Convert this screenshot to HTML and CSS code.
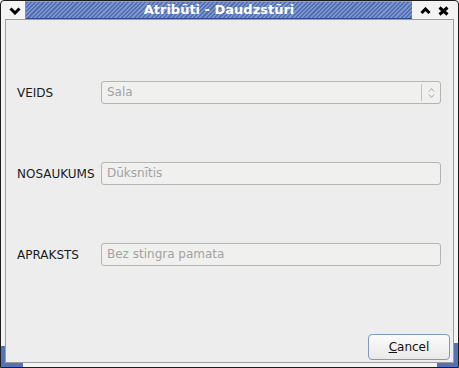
FILE: index.html
```html
<!DOCTYPE html>
<html lang="lv">
<head>
  <meta charset="UTF-8" />
  <title>Atribūti - Daudzstūri</title>
  <link rel="stylesheet" href="styles.css">
</head>
<body>
  <div class="window">
    <div class="titlebar">
      <div class="tb-menu">
        <svg width="12" height="8" viewBox="0 0 12 8"><path d="M1.5 1.5l4.5 4.5 4.5-4.5" fill="none" stroke="#000" stroke-width="3"/></svg>
      </div>
      <div class="tb-title">Atribūti - Daudzstūri</div>
      <div class="tb-btns">
        <span class="tb-btn">
          <svg width="11" height="7" viewBox="0 0 11 7"><path d="M1.5 6l4-4 4 4" fill="none" stroke="#000" stroke-width="3"/></svg>
        </span>
        <span class="tb-btn">
          <svg width="11" height="10" viewBox="0 0 11 10"><path d="M1.5 1.5l8 7M9.5 1.5l-8 7" fill="none" stroke="#000" stroke-width="3"/></svg>
        </span>
      </div>
    </div>

    <div class="client">
      <div class="form">
        <label class="label">VEIDS</label>
        <div class="field combo">
          <span class="combo-text">Sala</span>
          <span class="combo-arrow">
            <svg width="7" height="12" viewBox="0 0 7 12"><path d="M1 4.5l2.5-3 2.5 3M1 7.5l2.5 3 2.5-3" fill="none" stroke="#a8a8a8" stroke-width="1"/></svg>
          </span>
        </div>

        <label class="label">NOSAUKUMS</label>
        <div class="field">Dūksnītis</div>

        <label class="label">APRAKSTS</label>
        <div class="field">Bez stingra pamata</div>
      </div>

      <div class="footer">
        <button class="btn"><u>C</u>ancel</button>
      </div>
    </div>

    <span class="grip grip-left"></span>
    <span class="grip grip-right"></span>
  </div>
</body>
</html>
```

FILE: styles.css
```css
body {
  margin: 0;
  background: #fff;
  font-family: "DejaVu Sans", sans-serif;
  font-size: 12px;
  color: #1b1b1b;
}
.window {
  position: relative;
  box-sizing: border-box;
  width: 459px;
  height: 368px;
  border: 1px solid #1c1c1c;
  border-radius: 4px 4px 0 0;
  background: #f3f3f3;
  display: flex;
  flex-direction: column;
}
.titlebar {
  height: 18px;
  display: flex;
}
.tb-menu {
  box-sizing: border-box;
  width: 25px;
  padding: 2px 0 0 4px;
  border-right: 1px solid #8e8e8e;
  display: flex;
  align-items: center;
  justify-content: center;
}
.tb-title {
  flex: 1;
  box-sizing: border-box;
  border-bottom: 1px solid #2f4b8c;
  border-top: 1px solid #8aa0d4;
  background: repeating-linear-gradient(135deg, #5470b4 0 1.5px, #7c94cd 1.5px 3px);
  color: #fff;
  font-size: 13px;
  font-weight: bold;
  line-height: 16px;
  text-align: center;
}
.tb-btns {
  width: 46px;
  box-sizing: border-box;
  padding-left: 4px;
  display: flex;
}
.tb-btn {
  width: 18px;
  display: flex;
  align-items: center;
  justify-content: center;
  padding-top: 1px;
}
.client {
  flex: 1;
  margin: 0 4px 4px;
  border: 1px solid #9d9d9d;
  background: #ededed;
  display: flex;
  flex-direction: column;
}
.form {
  padding: 61px 12px 0 11px;
  display: grid;
  grid-template-columns: 84px 1fr;
  row-gap: 58px;
  align-items: center;
}
.field {
  box-sizing: border-box;
  height: 23px;
  border: 1px solid #b4b4b4;
  border-radius: 3px;
  background: #f0f0ef;
  padding: 0 5px;
  line-height: 21px;
  color: #a3a3a3;
}
.combo {
  display: flex;
  padding-right: 0;
}
.combo-text {
  flex: 1;
}
.combo-arrow {
  width: 18px;
  height: 17px;
  margin-top: 2px;
  border-left: 1px solid #c2c2c2;
  display: flex;
  align-items: center;
  justify-content: center;
}
.footer {
  margin-top: auto;
  display: flex;
  justify-content: flex-end;
  padding: 0 3px 2px 0;
}
.btn {
  width: 82px;
  height: 26px;
  border: 1px solid #7e9ac0;
  border-radius: 4px;
  background: linear-gradient(#fbfbfb, #e9e9e9);
  font-family: "DejaVu Sans", sans-serif;
  font-size: 12px;
  color: #111;
  padding: 0;
}
.grip {
  position: absolute;
  box-sizing: border-box;
  bottom: 0;
  border-bottom: 4px solid #5671b5;
}
.grip-left {
  left: 0;
  width: 22px;
  height: 21px;
  border-left: 4px solid #5671b5;
}
.grip-right {
  right: 0;
  width: 21px;
  height: 24px;
  border-right: 4px solid #5671b5;
}
```
